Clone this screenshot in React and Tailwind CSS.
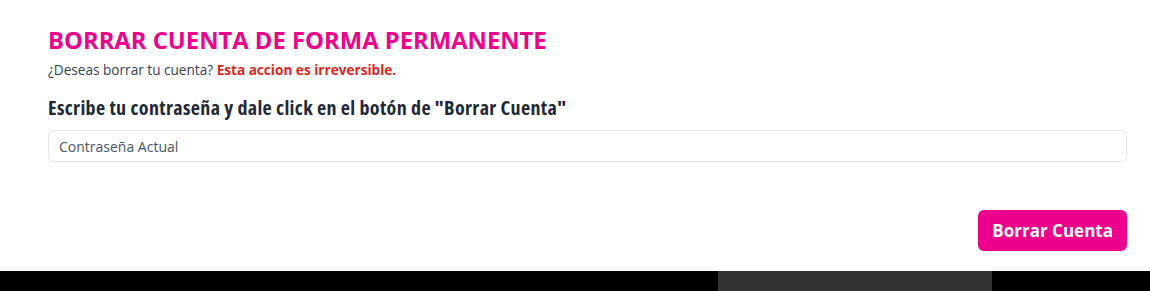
export default function App() {
  return (
    <div className="w-[1150px] h-[291px] flex flex-col bg-white" style={{ fontFamily: '"Open Sans", "Noto Sans", sans-serif' }}>
      <div className="flex-1 pl-12 pr-[23px] pt-6">
        <h1 className="text-[23.8px] leading-8 font-bold text-[#ec008c]">BORRAR CUENTA DE FORMA PERMANENTE</h1>
        <p className="mt-1 text-[13.6px] text-[#374151]">
          ¿Deseas borrar tu cuenta? <span className="font-bold text-[#dc2626]">Esta accion es irreversible.</span>
        </p>
        <h2 className="mt-[14px] text-xl font-bold font-stretch-condensed tracking-[0.36px] text-[#1f2937]">
          Escribe tu contraseña y dale click en el botón de "Borrar Cuenta"
        </h2>
        <input
          type="password"
          placeholder="Contraseña Actual"
          className="mt-2 w-full h-8 px-[10px] text-sm border border-[#e5e7eb] rounded-md placeholder:text-[#4b5563] outline-none"
        />
        <div className="flex justify-end mt-12">
          <button className="h-[41px] px-[14px] rounded-md bg-[#ec008c] text-white font-bold text-[17px]">
            Borrar Cuenta
          </button>
        </div>
      </div>
      <div className="h-5 bg-black flex">
        <div className="ml-[718px] w-[274px] bg-[#333333]" />
      </div>
    </div>
  )
}
